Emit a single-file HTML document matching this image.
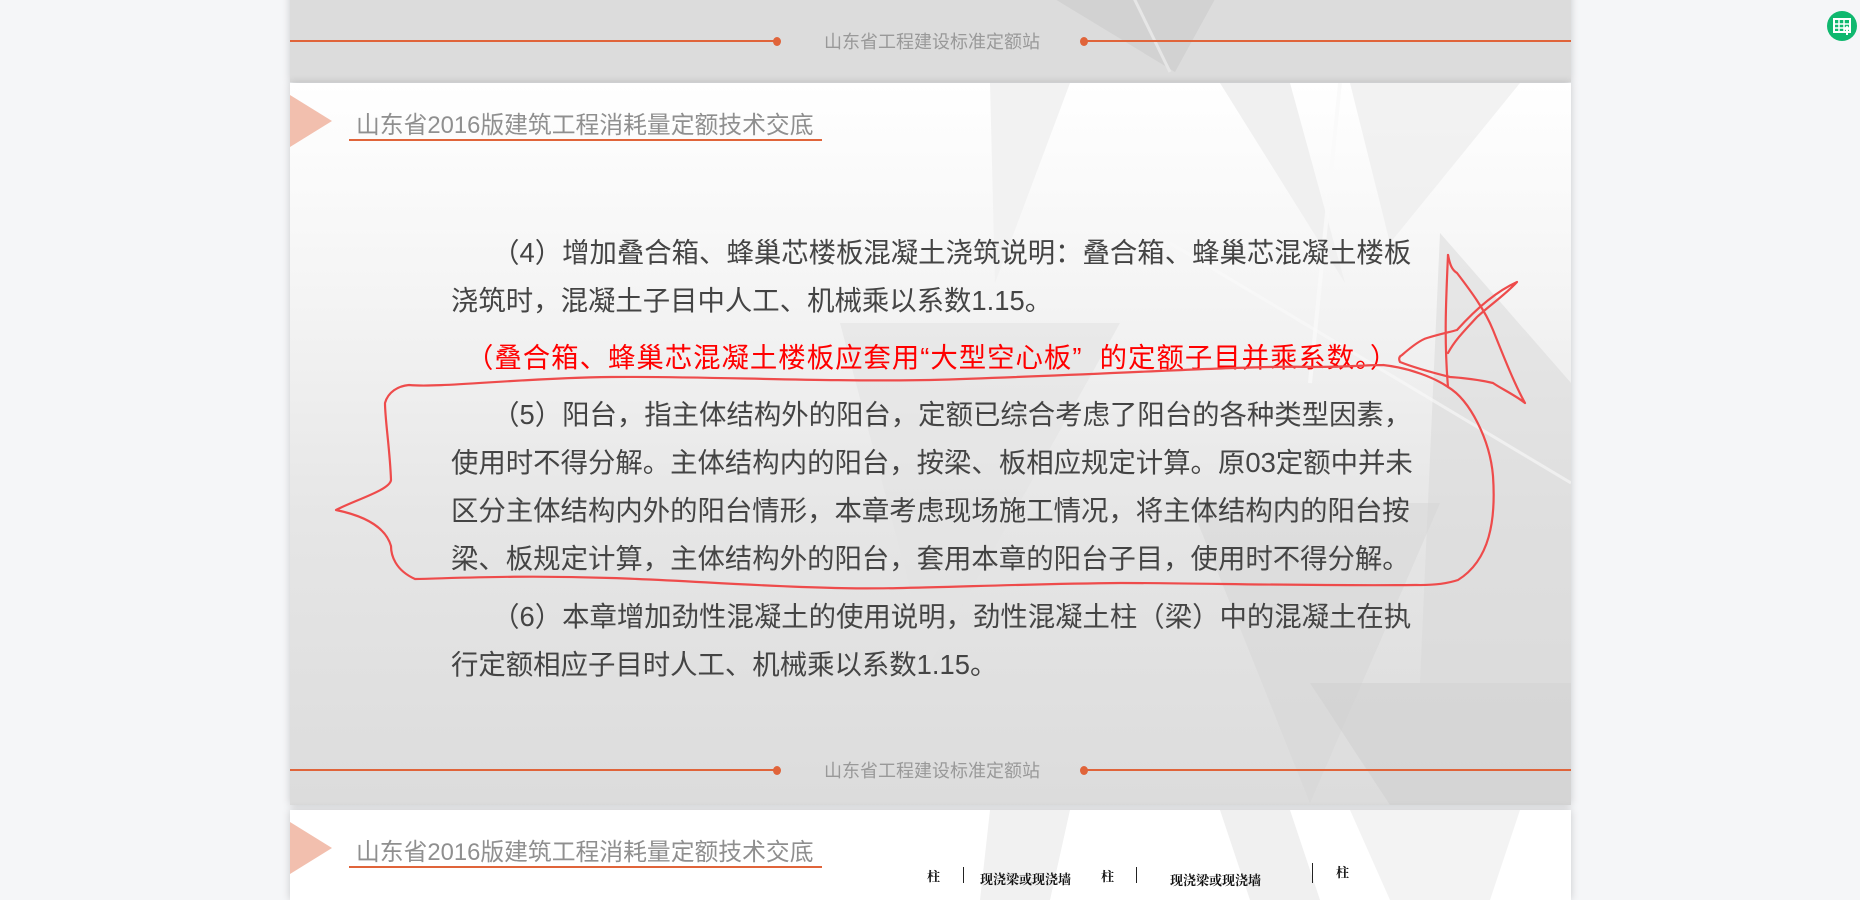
<!DOCTYPE html>
<html><head><meta charset="utf-8"><style>
*{margin:0;padding:0;box-sizing:border-box}
body{width:1860px;height:882px;background:#f5f6f8;position:relative;overflow:hidden;font-family:"Liberation Sans","Noto Sans CJK SC",sans-serif}
.card{position:absolute;left:290px;width:1281px;overflow:hidden;box-shadow:0 0 8px rgba(0,0,0,0.18)}
.foot{position:absolute;left:0;width:100%;height:2px}
.seg{position:absolute;height:2px;background:#e0643a;top:0}
.dot{position:absolute;width:8px;height:9px;border-radius:50%;background:#e0643a;top:-3px}
.ft{position:absolute;left:527px;width:230px;text-align:center;font-size:18px;color:#999;top:-12px}
.title{position:absolute;left:66px;font-size:23.8px;color:#8f8f8f}
.uline{position:absolute;left:59px;width:473px;height:2px;background:#e0643a}
.tri{position:absolute;left:0;width:0;height:0;border-top:26px solid transparent;border-bottom:26px solid transparent;border-left:42px solid #f2bfae}
.p{position:absolute;left:451px;width:1000px;font-size:27.4px;color:#444;line-height:48px;white-space:nowrap}
</style></head><body>

<div class="card" style="top:-10px;height:92px;background:#dcdcdc;">
<svg width="1281" height="92" style="position:absolute;left:0;top:0"><polygon points="750,0 930,0 885,82" fill="#d2d2d2"/><line x1="840" y1="0" x2="880" y2="82" stroke="#e6e6e6" stroke-width="3"/></svg>
<div class="foot" style="top:50px"><div class="seg" style="left:0;width:487px"></div><div class="seg" style="left:794px;width:487px"></div><div class="dot" style="left:483px"></div><div class="dot" style="left:790px"></div><div class="ft">山东省工程建设标准定额站</div></div>
</div>

<div class="card" style="top:83px;height:722px;background:linear-gradient(#ffffff 0%,#f4f4f4 30%,#e6e6e6 60%,#dcdcdc 100%);">
<svg width="1281" height="722" style="position:absolute;left:0;top:0">
<polygon points="700,0 780,0 705,200" fill="#f1f1f1" opacity="0.9"/>
<polygon points="930,0 1000,0 1055,200" fill="#f0f0f0"/>
<polygon points="1060,0 1230,0 1100,160" fill="#ececec" opacity="0.7"/>
<polygon points="1150,150 1281,300 1281,600 1130,600" fill="#d8d8d8" opacity="0.5"/>
<polygon points="550,240 830,240 640,580" fill="#e3e3e3" opacity="0.6"/>
<polygon points="900,420 1150,420 1020,720" fill="#d5d5d5" opacity="0.5"/>
<polygon points="1020,600 1281,600 1281,722 1100,722" fill="#d0d0d0" opacity="0.6"/>
<line x1="1050" y1="0" x2="1020" y2="300" stroke="#fafafa" stroke-width="4" opacity="0.8"/>
<line x1="880" y1="160" x2="1281" y2="400" stroke="#fafafa" stroke-width="3" opacity="0.6"/>
</svg>
<div class="tri" style="top:12px"></div>
<div class="title" style="top:22px">山东省2016版建筑工程消耗量定额技术交底</div>
<div class="uline" style="top:56px"></div>
<div class="foot" style="top:686px"><div class="seg" style="left:0;width:487px"></div><div class="seg" style="left:794px;width:487px"></div><div class="dot" style="left:483px"></div><div class="dot" style="left:790px"></div><div class="ft">山东省工程建设标准定额站</div></div>
</div>

<div class="p" style="top:229px">　　（4）增加叠合箱、蜂巢芯楼板混凝土浇筑说明：叠合箱、蜂巢芯混凝土楼板<br>浇筑时，混凝土子目中人工、机械乘以系数1.15。</div>
<div class="p" style="top:334px;color:#f00;left:466px;letter-spacing:1px">（叠合箱、蜂巢芯混凝土楼板应套用“大型空心板” &nbsp;的定额子目并乘系数。）</div>
<div class="p" style="top:391px">　　（5）阳台，指主体结构外的阳台，定额已综合考虑了阳台的各种类型因素，<br>使用时不得分解。主体结构内的阳台，按梁、板相应规定计算。原03定额中并未<br>区分主体结构内外的阳台情形，本章考虑现场施工情况，将主体结构内的阳台按<br>梁、板规定计算，主体结构外的阳台，套用本章的阳台子目，使用时不得分解。</div>
<div class="p" style="top:593px">　　（6）本章增加劲性混凝土的使用说明，劲性混凝土柱（梁）中的混凝土在执<br>行定额相应子目时人工、机械乘以系数1.15。</div>

<div class="card" style="top:810px;height:90px;background:#fff;">
<svg width="1281" height="90" style="position:absolute;left:0;top:0"><polygon points="700,0 780,0 760,90 690,90" fill="#f1f1f1"/><polygon points="930,0 1000,0 1030,90 960,90" fill="#f0f0f0"/><polygon points="1060,0 1230,0 1200,90 1100,90" fill="#f3f3f3"/></svg>
<div class="tri" style="top:12px"></div>
<div class="title" style="top:22px">山东省2016版建筑工程消耗量定额技术交底</div>
<div class="uline" style="top:56px"></div>
</div>
<div style="position:absolute;top:866px;left:0;width:1860px;font-family:'Liberation Serif','Noto Serif CJK SC',serif;font-size:13px;font-weight:bold;color:#111">
<span style="position:absolute;left:927px">柱</span>
<span style="position:absolute;left:963px;top:1px;width:1px;height:16px;background:#222"></span>
<span style="position:absolute;left:980px;top:3px">现浇梁或现浇墙</span>
<span style="position:absolute;left:1101px">柱</span>
<span style="position:absolute;left:1136px;top:1px;width:1px;height:16px;background:#222"></span>
<span style="position:absolute;left:1170px;top:4px">现浇梁或现浇墙</span>
<span style="position:absolute;left:1312px;top:-3px;width:1px;height:20px;background:#222"></span>
<span style="position:absolute;left:1336px;top:-4px">柱</span>
</div>

<svg width="1860" height="882" style="position:absolute;left:0;top:0" fill="none" stroke="#ee4b4b" stroke-width="2.2" stroke-linecap="round" stroke-linejoin="round">
<path d="M1383,365 C1410,368 1435,378 1448,387 C1470,400 1490,440 1493,476 C1496,520 1490,560 1458,580 C1440,586 1420,585 1415,585 C1300,586 1200,583 1121,583 C1000,584 900,590 835,588 C750,586 680,580 611,578 C520,575 460,578 415,579 C395,570 391,555 391,546 C385,525 360,515 336,510 C355,500 390,490 391,480 C390,450 385,420 385,403 C388,392 398,386 409,385 C440,388 520,378 611,377 C700,376 820,382 930,380 C1100,375 1250,365 1313,367 C1350,367 1365,365 1383,365"/>
<path d="M1448,255 C1446,300 1444,340 1448,387"/>
<path d="M1448,255 C1450,265 1452,270 1457,273 C1470,290 1485,310 1493,330 C1505,360 1515,385 1525,403 C1515,395 1500,388 1493,383 C1480,380 1465,378 1450,377 C1430,372 1410,366 1400,362 C1398,358 1400,356 1402,355 C1410,348 1420,340 1427,338 C1440,334 1450,332 1457,330 C1475,310 1495,292 1517,282 C1505,295 1490,305 1477,317 C1465,330 1455,340 1448,353"/>
</svg>

<div style="position:absolute;left:1827px;top:11px;width:30px;height:30px;border-radius:50%;background:#10b86f">
<svg width="30" height="30" style="position:absolute;left:0;top:0"><rect x="7" y="8" width="16" height="13" fill="none" stroke="#fff" stroke-width="2"/><line x1="7" y1="13" x2="23" y2="13" stroke="#fff" stroke-width="1.5"/><line x1="7" y1="17" x2="19" y2="17" stroke="#fff" stroke-width="1.5"/><line x1="12" y1="8" x2="12" y2="21" stroke="#fff" stroke-width="1.5"/><line x1="17" y1="8" x2="17" y2="21" stroke="#fff" stroke-width="1.5"/><path d="M20,24 L20,17 M17,19 L20,16 L23,19" stroke="#fff" stroke-width="2" fill="none"/></svg>
</div>
</body></html>
